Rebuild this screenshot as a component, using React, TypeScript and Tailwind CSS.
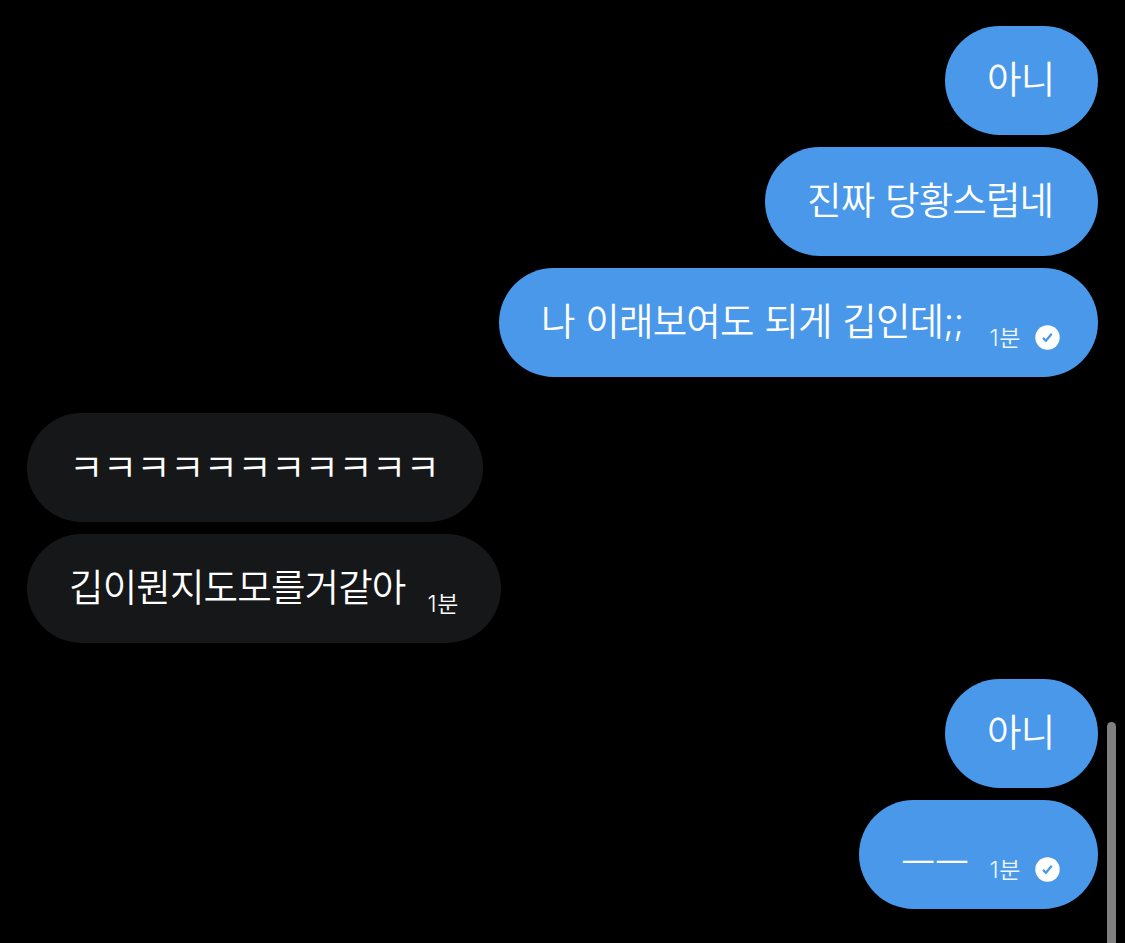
import React from 'react';

interface Message {
  id: number;
  text: string;
  mine: boolean;
  width: string;
  offset?: string;
  time?: string;
}

// Consecutive messages from the same person share a group
const groups: Message[][] = [
  [
    { id: 1, text: '아니', mine: true, width: 'w-[153px]' },
    { id: 2, text: '진짜 당황스럽네', mine: true, width: 'w-[333px]' },
    { id: 3, text: '나 이래보여도 되게 깁인데;;', mine: true, width: 'w-[599px]', time: '1분' },
  ],
  [
    { id: 4, text: 'ㅋㅋㅋㅋㅋㅋㅋㅋㅋㅋㅋ', mine: false, width: 'w-[456px]', offset: 'pt-[27px]' },
    { id: 5, text: '깁이뭔지도모를거같아', mine: false, width: 'w-[474px]', time: '1분' },
  ],
  [
    { id: 6, text: '아니', mine: true, width: 'w-[153px]' },
    { id: 7, text: 'ㅡㅡ', mine: true, width: 'w-[239px]', offset: 'pt-[35px]', time: '1분' },
  ],
];

const SentIcon: React.FC = () => (
  <svg viewBox="0 0 25 25" className="w-[25px] h-[25px] mr-[38px] shrink-0" aria-hidden="true">
    <circle cx="12.5" cy="12.5" r="12.2" fill="#fff" />
    <path d="M8 12.9l2.9 2.9 5.8-7" fill="none" stroke="#4a98e9" strokeWidth="2.2" />
  </svg>
);

const Bubble: React.FC<{ message: Message }> = ({ message }) => (
  <div
    className={`h-[109px] rounded-full pl-[42px] flex items-start justify-between text-white whitespace-nowrap ${message.width} ${
      message.mine ? 'bg-[#4a98e9]' : 'bg-[#161719]'
    }`}
  >
    <span
      className={`text-[37.5px] leading-[56px] tracking-[-0.85px] [word-spacing:1px] ${message.offset ?? 'pt-[26px]'}`}
    >
      {message.text}
    </span>
    {message.time && (
      <div className={`h-[25px] mt-[57px] flex items-center gap-[14px] ${message.mine ? '' : 'mr-[42px]'}`}>
        <span
          className={`text-[23px] leading-6 tracking-[0.6px] ${message.mine ? 'text-white/90' : 'text-white'}`}
        >
          {message.time}
        </span>
        {message.mine && <SentIcon />}
      </div>
    )}
  </div>
);

const App: React.FC = () => {
  return (
    <main className="relative w-full h-[943px] overflow-hidden bg-black px-[27px] pt-[26px] flex flex-col gap-9 font-['Inter','Noto_Sans_CJK_KR',sans-serif] font-[350]">
      {groups.map((group) => (
        <section
          key={group[0].id}
          className={`flex flex-col gap-3 ${group[0].mine ? 'items-end' : 'items-start'}`}
        >
          {group.map((message) => (
            <Bubble key={message.id} message={message} />
          ))}
        </section>
      ))}

      {/* Scrollbar thumb */}
      <div className="absolute top-[722px] right-[9px] bottom-0 w-[9px] rounded-t-full bg-[#808080]"></div>
    </main>
  );
};

export default App;
